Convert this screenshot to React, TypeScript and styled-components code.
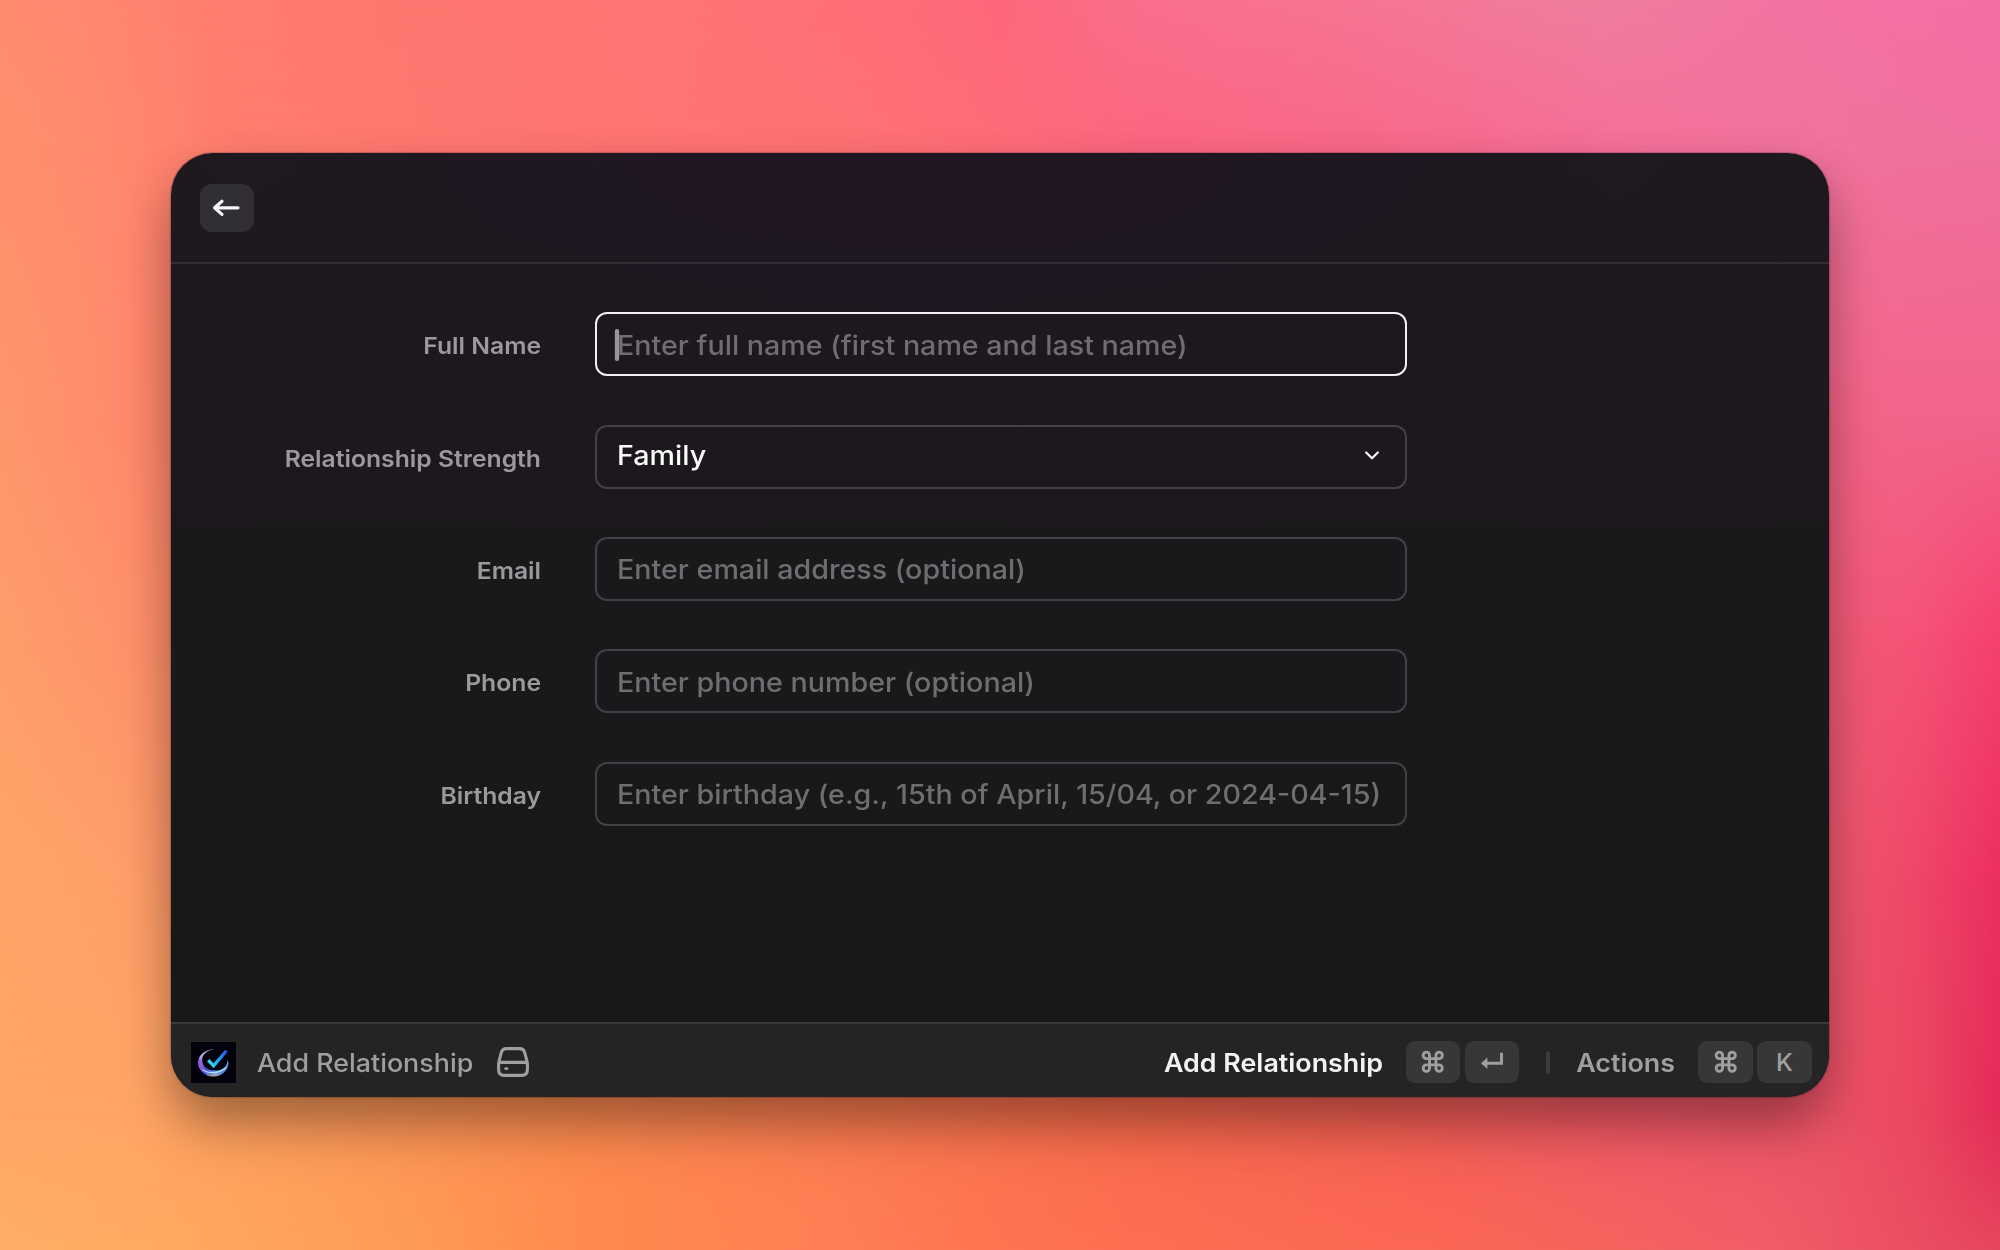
import React from "react";
import styled, { createGlobalStyle, css } from "styled-components";

const GlobalStyle = createGlobalStyle`
  *, *::before, *::after { box-sizing: border-box; }
  body { margin: 0; overflow: hidden; font-family: Inter, "Liberation Sans", sans-serif; }
`;

const extended = (origin: "left" | "right") => css`
  display: inline-block;
  transform: scaleX(1.074);
  transform-origin: ${origin} center;
`;

/* ---------- Desktop wallpaper: a mesh made of horizontal bands ---------- */

type Band = { from: number; to: number; stops: string };

const bands: Band[] = [
  {
    from: -1, to: 0,
    stops: "#ff8b70 0%, #ff8970 4%, #ff7d70 11%, #ff7670 22%, #ff7574 33%, #ff6d78 45%, #fe677c 50%, #fa6f8c 57%, #f77491 66%, #f07d9e 80%, #f373a2 90%, #f46fa6 100%",
  },
  {
    from: 0, to: 154,
    stops: "#ff8f6c 0%, #ff8a6e 5%, #ff7c6f 12%, #ff7670 25%, #ff7173 43%, #ff6c78 50%, #fc6580 57%, #f86888 68%, #f4709a 82%, #f0739c 90%, #f0709d 100%",
  },
  {
    from: 154, to: 420,
    stops: "#ff966b 0%, #ff8b6c 6%, #ff826c 10%, #ff7470 30%, #fa6078 60%, #f56585 90%, #f3648a 95%, #f2648a 100%",
  },
  {
    from: 420, to: 640,
    stops: "#ff9d6a 0%, #ff936a 6%, #ff8a6a 10%, #ff7468 30%, #f66076 60%, #f25e78 90%, #f45276 96%, #f5406d 100%",
  },
  {
    from: 640, to: 880,
    stops: "#ffa569 0%, #ff9f69 6%, #ff9768 10%, #ff8058 30%, #f5605c 60%, #ef5b70 91%, #ee4568 96%, #ec2e60 100%",
  },
  {
    from: 880, to: 1110,
    stops: "#ffa667 0%, #ffa566 7%, #ffa05e 12%, #fe8c50 28%, #fc7c50 42%, #f96b4c 56%, #f65f55 70%, #f25868 82%, #ed5468 91%, #ea4660 96%, #e42b58 100%",
  },
  {
    from: 1110, to: 1250,
    stops: "#ffae67 0%, #ffa860 9%, #ff9e59 18%, #ff894e 30%, #ff8155 40%, #ff7450 50%, #fd6c52 60%, #fb6755 72%, #f4635e 81%, #f25d68 88%, #e5465f 100%",
  },
];

const Desktop = styled.main`
  position: relative;
  width: 2000px;
  height: 1250px;
  padding-bottom: 0.4px;
  display: grid;
  place-items: center;
  overflow: hidden;
`;

const WallpaperBand = styled.div<{ $band: Band }>`
  position: absolute;
  inset: 0;
  background: linear-gradient(to right, ${(p) => p.$band.stops});
  mask-image: linear-gradient(
    to bottom,
    transparent ${(p) => p.$band.from}px,
    #000 ${(p) => p.$band.to}px
  );
`;

/* ---------- Window ---------- */

const Window = styled.section`
  position: relative;
  display: flex;
  flex-direction: column;
  width: 1658px;
  height: 943.4px;
  border-radius: 42px;
  overflow: hidden;
  background:
    radial-gradient(ellipse 900px 300px at 46% 0%, rgba(33, 20, 40, 0.6), transparent),
    linear-gradient(to bottom, #1e191e 0%, #1c181d 30%, #19181a 60%, #171818 100%);
  box-shadow:
    0 0 1px 1px rgba(30, 10, 20, 0.2),
    0 18px 44px rgba(0, 0, 0, 0.17),
    0 34px 56px -4px rgba(0, 0, 0, 0.25);
`;

const Header = styled.header`
  flex: none;
  height: 110.4px;
  padding: 30.8px 29px 0;
  border-bottom: 2px solid #312d33;
`;

const BackButton = styled.button`
  display: grid;
  place-items: center;
  width: 54px;
  height: 48px;
  padding: 0;
  border: 0;
  border-radius: 12px;
  background: #322e35;
  color: #f6f6f6;
`;

const Form = styled.form`
  flex: 1;
  display: flex;
  flex-direction: column;
  gap: 48.3px;
  padding-top: 48.9px;
`;

const Row = styled.div`
  display: grid;
  grid-template-columns: 370px 812.4px;
  column-gap: 54px;
  height: 64px;
`;

const Label = styled.label`
  ${extended("right")}
  font-size: 23px;
  font-weight: 600;
  line-height: 69px;
  text-align: right;
  color: #9b999c;
`;

const Field = styled.div<{ $focused?: boolean; $filled?: boolean }>`
  display: flex;
  align-items: center;
  justify-content: space-between;
  height: 64px;
  padding: ${(p) => (p.$filled ? "0 25.5px 2.5px 20px" : "0.5px 25.5px 0 20px")};
  border: 2px solid ${(p) => (p.$focused ? "#f1f0f1" : "#434145")};
  border-radius: 12px;
  font-size: 26.7px;
  font-weight: 510;
  white-space: nowrap;
  color: ${(p) => (p.$filled ? "#fafafa" : "#6f6d70")};
`;

const Value = styled.span`
  ${extended("left")}
  position: relative;
`;

const Caret = styled.i`
  position: absolute;
  left: -2.3px;
  top: 0;
  width: 4px;
  height: 32px;
  border-radius: 2px;
  background: #98969a;
`;

const Footer = styled.footer`
  flex: none;
  display: flex;
  align-items: center;
  height: 74.5px;
  padding: 3.6px 17.5px 0 20px;
  border-top: 2px solid #3a3a3a;
  background: #242424;
  color: #9f9f9f;
  font-size: 25px;
  line-height: 30px;
  white-space: nowrap;
`;

const CommandName = styled.span`
  ${extended("left")}
  margin: 0 39px 0 20.8px;
  padding-top: 1.2px;
  font-weight: 540;
`;

const ActionName = styled.span<{ $primary?: boolean }>`
  ${extended("right")}
  margin-right: ${(p) => (p.$primary ? "23.4px" : "23px")};
  padding-top: 1.2px;
  font-weight: 600;
  color: ${(p) => (p.$primary ? "#f3f3f3" : "#9f9f9f")};
`;

const Spacer = styled.div`
  flex: 1;
`;

const Keys = styled.div`
  display: flex;
  gap: 4.5px;
`;

const Key = styled.kbd`
  display: grid;
  place-items: center;
  width: 54.3px;
  height: 42px;
  border-radius: 9px;
  background: #373737;
  color: #9f9f9f;
  font: 500 24.5px/42px Inter, "Liberation Sans", sans-serif;
`;

const Divider = styled.div`
  width: 4px;
  height: 23px;
  margin: 0 33.8px 0 26.5px;
  border-radius: 2px;
  background: #3c3c3c;
`;

/* ---------- Icons ---------- */

const ArrowLeft = () => (
  <svg width="30" height="22" viewBox="0 0 30 22" fill="none" stroke="currentColor" strokeWidth="3.2" strokeLinecap="round" strokeLinejoin="round">
    <path d="M2.6 10.8H26M10 4.2L2.6 10.8L10 17.4" />
  </svg>
);

const Chevron = () => (
  <svg width="16" height="12" viewBox="0 0 16 12" fill="none" stroke="currentColor" strokeWidth="2.2" strokeLinecap="round" strokeLinejoin="round">
    <path d="M2.2 3.5L8 9.3L13.8 3.5" />
  </svg>
);

const CommandIcon = () => (
  <svg width="25.5" height="25.5" viewBox="0 0 24 24" fill="none" stroke="currentColor" strokeWidth="2.7" strokeLinejoin="round">
    <path d="M15 6v12a3 3 0 1 0 3-3H6a3 3 0 1 0 3 3V6a3 3 0 1 0-3 3h12a3 3 0 1 0-3-3" />
  </svg>
);

const ReturnIcon = () => (
  <svg width="24" height="20" viewBox="0 0 24 20" fill="none">
    <path d="M6 11.2H21.5V0.8" stroke="currentColor" strokeWidth="2.9" />
    <path d="M1 11.2L7.4 5.4V17Z" fill="currentColor" />
  </svg>
);

const DriveIcon = () => (
  <svg width="32" height="30" viewBox="0 0 32 30" fill="none" stroke="currentColor" strokeWidth="3.1" strokeLinejoin="round" strokeLinecap="round">
    <path d="M1.6 17.6C1.6 15.8 2 14.3 2.4 12.6L4.3 5.6C5.1 2.8 6.6 1.6 9.3 1.6H22.7C25.4 1.6 26.9 2.8 27.7 5.6L29.6 12.6C30 14.3 30.4 15.8 30.4 17.6V22.6C30.4 26.4 28.4 28.4 24.8 28.4H7.2C3.6 28.4 1.6 26.4 1.6 22.6Z" />
    <path d="M2.6 15.4H29.4" />
    <path d="M8.7 21.7H10" strokeWidth="2.8" />
  </svg>
);

const LogoMark = () => (
  <svg width="45" height="41" viewBox="0 0 45 41" fill="none">
    <defs>
      <linearGradient id="ring" x1="8" y1="8" x2="36" y2="34" gradientUnits="userSpaceOnUse">
        <stop offset="0" stopColor="#f3e6d8" />
        <stop offset="0.25" stopColor="#8d7bd8" />
        <stop offset="0.5" stopColor="#4a49dc" />
        <stop offset="0.75" stopColor="#6db4f2" />
        <stop offset="1" stopColor="#2a3fae" />
      </linearGradient>
      <linearGradient id="tick" x1="17" y1="22" x2="36" y2="8" gradientUnits="userSpaceOnUse">
        <stop offset="0" stopColor="#35e0ee" />
        <stop offset="0.5" stopColor="#1f9bf5" />
        <stop offset="1" stopColor="#2743ea" />
      </linearGradient>
    </defs>
    <rect width="45" height="41" fill="#02020c" />
    <path d="M23 7.3C13.5 7.5 7.2 13.5 7.2 20.8C7.2 28.8 14 34.5 22.5 34.5C31 34.5 37.5 28.5 37.5 20.5L36.6 18.4C36.2 24.5 31 28.6 24 28.6C16.5 28.6 11.2 24.3 11.2 18.3C11.2 13 15.5 8.6 23 7.3Z" fill="url(#ring)" />
    <path d="M11 27.2C17 32 29 32.2 35.5 25.2" stroke="#b9d9fb" strokeWidth="1.1" />
    <path d="M8.8 17.5C8 21.5 8.8 25 11.5 28" stroke="#a04be0" strokeWidth="2" />
    <path d="M16 32.6C20 34.3 25 34.3 29 32.3" stroke="#d98a6a" strokeWidth="1" />
    <path d="M17.3 18.2L22.6 23.8L35.4 8.8" stroke="url(#tick)" strokeWidth="3.3" />
  </svg>
);

/* ---------- Screen ---------- */

const fields = [
  { label: "Full Name", text: "Enter full name (first name and last name)", focused: true },
  { label: "Relationship Strength", text: "Family", select: true },
  { label: "Email", text: "Enter email address (optional)" },
  { label: "Phone", text: "Enter phone number (optional)" },
  { label: "Birthday", text: "Enter birthday (e.g., 15th of April, 15/04, or 2024-04-15)" },
];

export default function App() {
  return (
    <Desktop>
      <GlobalStyle />
      {bands.map((band) => (
        <WallpaperBand key={band.to} $band={band} />
      ))}
      <Window>
        <Header>
          <BackButton type="button" aria-label="Back">
            <ArrowLeft />
          </BackButton>
        </Header>
        <Form>
          {fields.map((f) => (
            <Row key={f.label}>
              <Label>{f.label}</Label>
              <Field $focused={f.focused} $filled={f.select}>
                <Value>
                  {f.text}
                  {f.focused && <Caret />}
                </Value>
                {f.select && <Chevron />}
              </Field>
            </Row>
          ))}
        </Form>
        <Footer>
          <LogoMark />
          <CommandName>Add Relationship</CommandName>
          <DriveIcon />
          <Spacer />
          <ActionName $primary>Add Relationship</ActionName>
          <Keys>
            <Key><CommandIcon /></Key>
            <Key><ReturnIcon /></Key>
          </Keys>
          <Divider />
          <ActionName>Actions</ActionName>
          <Keys>
            <Key><CommandIcon /></Key>
            <Key>K</Key>
          </Keys>
        </Footer>
      </Window>
    </Desktop>
  );
}
